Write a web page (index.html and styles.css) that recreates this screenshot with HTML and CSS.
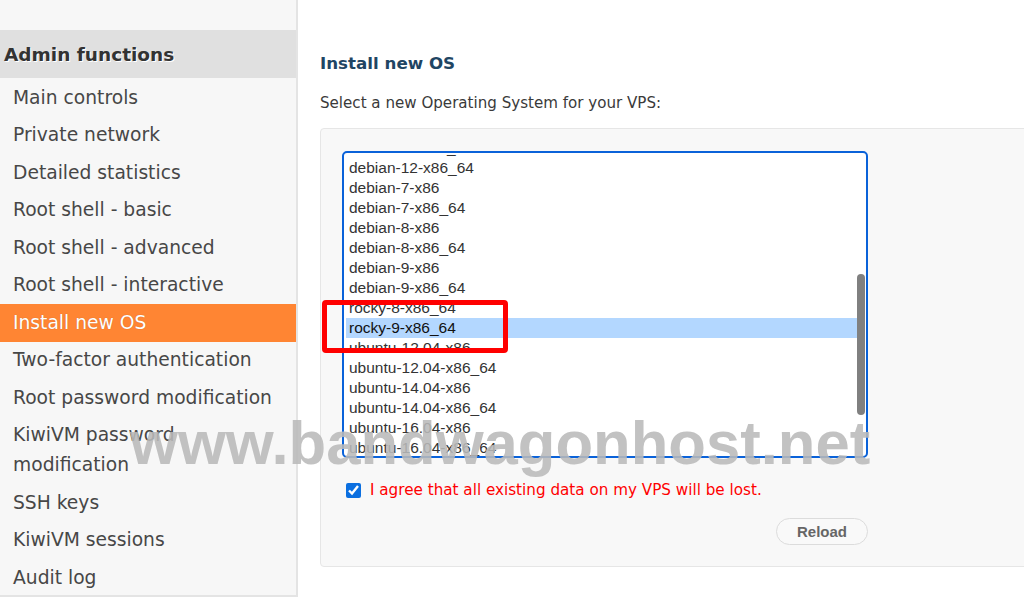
FILE: index.html
```html
<!DOCTYPE html>
<html lang="en">
<head>
    <meta charset="UTF-8">
    <meta name="viewport" content="width=device-width, initial-scale=1.0">
    <title>KiwiVM - Install new OS</title>
    <link rel="stylesheet" href="styles.css">
</head>
<body>
    <div class="page">
        <div class="sidebar">
            <div class="side-title">Admin functions</div>
            <ul class="menu">
                <li>Main controls</li>
                <li>Private network</li>
                <li>Detailed statistics</li>
                <li>Root shell - basic</li>
                <li>Root shell - advanced</li>
                <li>Root shell - interactive</li>
                <li class="active">Install new OS</li>
                <li>Two-factor authentication</li>
                <li>Root password modification</li>
                <li>KiwiVM password modification</li>
                <li>SSH keys</li>
                <li>KiwiVM sessions</li>
                <li>Audit log</li>
            </ul>
        </div>

        <div class="main">
            <h2 class="title">Install new OS</h2>
            <p class="intro">Select a new Operating System for your VPS:</p>

            <div class="panel">
                <div class="os-list">
                    <ul class="os-options">
                        <li>debian-11-x86_64</li>
                        <li>debian-12-x86_64</li>
                        <li>debian-7-x86</li>
                        <li>debian-7-x86_64</li>
                        <li>debian-8-x86</li>
                        <li>debian-8-x86_64</li>
                        <li>debian-9-x86</li>
                        <li>debian-9-x86_64</li>
                        <li>rocky-8-x86_64</li>
                        <li class="selected">rocky-9-x86_64</li>
                        <li>ubuntu-12.04-x86</li>
                        <li>ubuntu-12.04-x86_64</li>
                        <li>ubuntu-14.04-x86</li>
                        <li>ubuntu-14.04-x86_64</li>
                        <li>ubuntu-16.04-x86</li>
                        <li>ubuntu-16.04-x86_64</li>
                        <li>ubuntu-18.04-x86_64</li>
                    </ul>
                    <div class="thumb"></div>
                </div>

                <label class="agree">
                    <input type="checkbox" checked>
                    <span>I agree that all existing data on my VPS will be lost.</span>
                </label>

                <div class="actions">
                    <button class="btn">Reload</button>
                </div>
            </div>
        </div>

        <div class="highlight"></div>
        <div class="watermark">www.bandwagonhost.net</div>
    </div>
</body>
</html>
```

FILE: styles.css
```css
* {
    box-sizing: border-box;
}
html, body {
    margin: 0;
    height: 100%;
    overflow: hidden;
    background: #fff;
}
body {
    font-family: 'DejaVu Sans', Verdana, sans-serif;
    color: #333;
}
.page {
    position: relative;
    display: flex;
    height: 597px;
}
.sidebar {
    width: 298px;
    flex-shrink: 0;
    height: 597px;
    background: #f7f7f7;
    border-right: 2px solid #e4e4e4;
    border-bottom: 2px solid #e4e4e4;
    padding-top: 30px;
}
.side-title {
    height: 48px;
    line-height: 50px;
    padding-left: 4px;
    background: #e0e0e0;
    font-weight: bold;
    font-size: 18.5px;
    color: #333;
    text-shadow: 1px 1px 0 #fff;
}
.menu {
    list-style: none;
    margin: 0;
    padding: 1px 0 0;
}
.menu li {
    padding: 3.75px 13px;
    line-height: 30px;
    font-size: 18.7px;
    color: #474747;
    width: 296px;
}
.menu li.active {
    background: #ff8533;
    color: #fff;
    text-shadow: 0 0 1px rgba(0, 0, 0, 0.25);
}
.main {
    padding-left: 22px;
    flex-grow: 1;
}
.title {
    margin: 53px 0 0;
    line-height: 20px;
    font-size: 16.7px;
    font-weight: bold;
    color: #1f4563;
}
.intro {
    margin: 20px 0 0;
    line-height: 20px;
    font-size: 15.1px;
    color: #3a3a3a;
}
.panel {
    margin-top: 15px;
    width: 760px;
    background: #f8f8f8;
    border: 1px solid #e6e6e6;
    border-radius: 4px;
    padding: 22px 21px 21px;
}
.os-list {
    position: relative;
    width: 526px;
    height: 307px;
    border: 2px solid #0a62d9;
    border-radius: 5px;
    background: #fff;
    overflow: hidden;
}
.os-options {
    list-style: none;
    margin: -15px 0 0;
    padding: 0 3px 0 2px;
    font-family: 'Liberation Sans', Arial, sans-serif;
    font-size: 15.5px;
    color: #333;
}
.os-options li {
    line-height: 20px;
    padding-left: 3px;
}
.os-options li.selected {
    background: #b3d7ff;
    color: #111;
}
.thumb {
    position: absolute;
    right: 1px;
    top: 121px;
    width: 8px;
    height: 141px;
    border-radius: 4px;
    background: #808080;
}
.agree {
    display: flex;
    align-items: center;
    margin-top: 22px;
    height: 20px;
    font-size: 15.2px;
    color: #f00;
}
.agree input {
    width: 15px;
    height: 15px;
    margin: 0 9px 0 4px;
    accent-color: #0b6fe0;
}
.actions {
    width: 526px;
    text-align: right;
    margin-top: 18px;
}
.btn {
    width: 92px;
    height: 27px;
    border: 1px solid #dcdcdc;
    border-radius: 14px;
    background: #f9f9f9;
    font-family: 'Liberation Sans', Arial, sans-serif;
    font-weight: bold;
    font-size: 15px;
    color: #666;
    padding: 0;
}
.highlight {
    position: absolute;
    left: 322px;
    top: 300px;
    width: 186px;
    height: 53px;
    border: 5px solid #f00;
    border-radius: 4px;
}
.watermark {
    position: absolute;
    left: 130px;
    top: 412px;
    font-family: 'Liberation Sans', Arial, sans-serif;
    font-weight: bold;
    font-size: 61.6px;
    line-height: 1;
    color: rgba(185, 185, 185, 0.88);
    white-space: nowrap;
    pointer-events: none;
}
```
